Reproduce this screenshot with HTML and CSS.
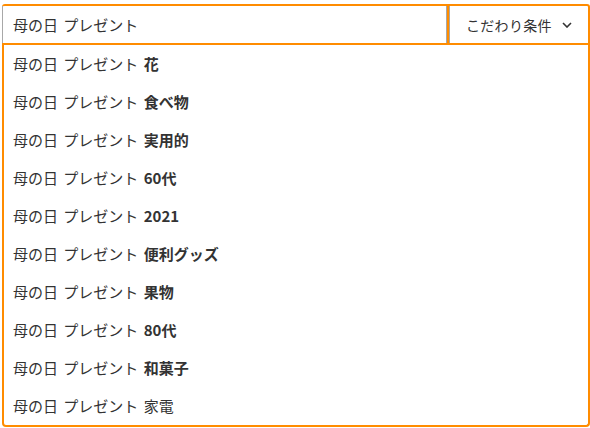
FILE: index.html
```html
<!DOCTYPE html>
<html lang="ja">
<head>
<meta charset="utf-8">
<link rel="stylesheet" href="styles.css">
</head>
<body>
<div class="search">
  <div class="bar">
    <div class="input">母の日 プレゼント</div>
    <div class="cond">こだわり条件<svg class="chev" width="10" height="6" viewBox="0 0 10 6"><path d="M1 1 L5 5 L9 1" fill="none" stroke="#333" stroke-width="1.6"/></svg></div>
  </div>
  <ul class="suggest">
    <li>母の日 プレゼント <b>花</b></li>
    <li>母の日 プレゼント <b>食べ物</b></li>
    <li>母の日 プレゼント <b>実用的</b></li>
    <li>母の日 プレゼント <b>60代</b></li>
    <li>母の日 プレゼント <b>2021</b></li>
    <li>母の日 プレゼント <b>便利グッズ</b></li>
    <li>母の日 プレゼント <b>果物</b></li>
    <li>母の日 プレゼント <b>80代</b></li>
    <li>母の日 プレゼント <b>和菓子</b></li>
    <li>母の日 プレゼント 家電</li>
  </ul>
</div>
</body>
</html>
```
FILE: styles.css
```css
body {
  margin: 0;
  background: #fff;
  font-family: "Noto Sans CJK JP", sans-serif;
  font-size: 15px;
  color: #333;
}
.search {
  margin: 4px 0 0 2px;
  width: 588px;
}
.bar {
  display: flex;
  height: 41px;
  box-sizing: border-box;
  border-top: 2px solid #ff8c00;
  border-bottom: 2px solid #ff8c00;
  border-right: 2px solid #ff8c00;
  border-radius: 3px 3px 0 0;
}
.input {
  flex: 1;
  display: flex;
  align-items: center;
  padding-left: 10px;
  border-left: 1px solid #a8a8a8;
  border-right: 1px solid #a8a8a8;
  word-spacing: 2px;
}
.cond {
  width: 122px;
  display: flex;
  align-items: center;
  padding-left: 17px;
  border-left: 2px solid #ff8c00;
  box-shadow: inset 1px 0 0 #a8a8a8;
  font-size: 14px;
  letter-spacing: 0.3px;
}
.chev {
  margin-left: 10px;
}
.suggest {
  margin: 0;
  padding: 0;
  list-style: none;
  border: 2px solid #ff8c00;
  border-top: none;
  border-radius: 0 0 4px 4px;
}
.suggest li {
  height: 38px;
  line-height: 38px;
  padding-left: 9px;
  word-spacing: 2px;
}
.suggest b {
  font-weight: 700;
}
```
